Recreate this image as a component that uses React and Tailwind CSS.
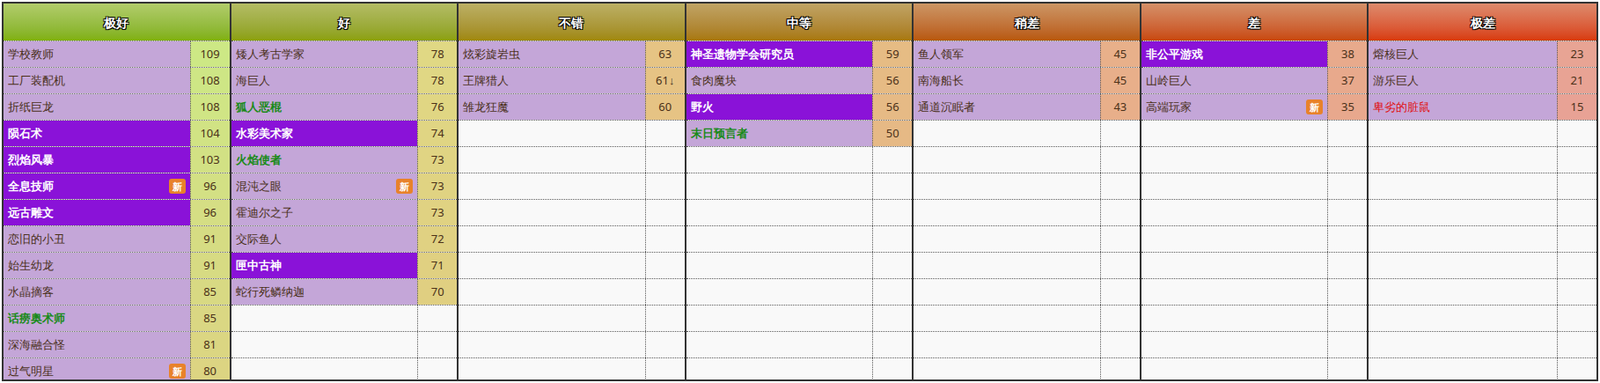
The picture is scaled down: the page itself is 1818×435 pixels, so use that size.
const COLS = [
  { title: "极好", head: "from-[#b2cc6a] to-[#80b00a]", score: ["#cde885", "#dcd482"], rows: [
    ["学校教师", 109], ["工厂装配机", 108], ["折纸巨龙", 108], ["陨石术", 104, "p"], ["烈焰风暴", 103, "p"],
    ["全息技师", 96, "p", 1], ["远古雕文", 96, "p"], ["恋旧的小丑", 91], ["始生幼龙", 91], ["水晶摘客", 85],
    ["话痨奥术师", 85, "g"], ["深海融合怪", 81], ["过气明星", 80, 0, 1],
  ] },
  { title: "好", head: "from-[#b4bc64] to-[#8ca008]", score: ["#e0d884", "#e0cc80"], rows: [
    ["矮人考古学家", 78], ["海巨人", 78], ["狐人恶棍", 76, "g"], ["水彩美术家", 74, "p"], ["火焰使者", 73, "g"],
    ["混沌之眼", 73, 0, 1], ["霍迪尔之子", 73], ["交际鱼人", 72], ["匣中古神", 71, "p"], ["蛇行死鳞纳迦", 70],
  ] },
  { title: "不错", head: "from-[#bcb064] to-[#a08808]", score: ["#e6c484", "#e6bc84"], rows: [
    ["炫彩旋岩虫", 63], ["王牌猎人", "61↓"], ["雏龙狂魔", 60],
  ] },
  { title: "中等", head: "from-[#c0a464] to-[#a87808]", score: ["#e6bc84", "#e6b088"], rows: [
    ["神圣遗物学会研究员", 59, "p"], ["食肉魔块", 56], ["野火", 56, "p"], ["末日预言者", 50, "g"],
  ] },
  { title: "稍差", head: "from-[#cc9664] to-[#b85808]", score: ["#e8b08a", "#e8a88a"], rows: [
    ["鱼人领军", 45], ["南海船长", 45], ["通道沉眠者", 43],
  ] },
  { title: "差", head: "from-[#d49068] to-[#c84808]", score: ["#e8aa8c", "#e8a090"], rows: [
    ["非公平游戏", 38, "p"], ["山岭巨人", 37], ["高端玩家", 35, 0, 1],
  ] },
  { title: "极差", head: "from-[#dc8a6c] to-[#d83a08]", score: ["#e8a494", "#e89a98"], rows: [
    ["熔核巨人", 23], ["游乐巨人", 21], ["卑劣的脏鼠", 15, "r"],
  ] },
];

const NAME = {
  p: "bg-[#8a12d8] text-white font-bold",
  g: "bg-[#c4a6d8] text-[#1a8a1a] font-bold",
  r: "bg-[#c4a6d8] text-[#e01010]",
};

function mix(a, b, t) {
  const p = h => [1, 3, 5].map(i => parseInt(h.slice(i, i + 2), 16));
  const [x, y] = [p(a), p(b)];
  return `rgb(${x.map((v, i) => Math.round(v + (y[i] - v) * t)).join(",")})`;
}

function Column({ col, last }) {
  const rows = Array.from({ length: 13 }, (_, i) => col.rows[i]);
  return (
    <div className={`flex flex-col ${last ? "" : "border-r-2 border-[#333]"}`}>
      <div className={`h-[42px] flex items-center justify-center bg-gradient-to-b ${col.head} text-white text-[14px] font-bold [text-shadow:1px_1px_0_#000,-1px_-1px_0_#000,1px_-1px_0_#000,-1px_1px_0_#000]`}>
        {col.title}
      </div>
      {rows.map((r, i) => (
        <div key={i} className="h-[30px] flex border-t border-dotted border-[#555]">
          {r ? (
            <>
              <div className={`flex-1 flex items-center px-[5px] text-[13px] ${NAME[r[2]] || "bg-[#c4a6d8] text-[#4a3018]"}`}>
                <span className="flex-1">{r[0]}</span>
                {r[3] ? (
                  <span className="bg-[#e8822a] text-white text-[11px] font-bold rounded-[3px] px-[4px] leading-[17px]">新</span>
                ) : null}
              </div>
              <div
                className="w-[45px] flex items-center justify-center border-l border-dotted border-[#555] text-[13px] text-[#4a3018]"
                style={{ background: mix(col.score[0], col.score[1], i / 12) }}
              >
                {r[1]}
              </div>
            </>
          ) : (
            <>
              <div className="flex-1 bg-[#f9f9f9]" />
              <div className="w-[45px] bg-[#f9f9f9] border-l border-dotted border-[#555]" />
            </>
          )}
        </div>
      ))}
    </div>
  );
}

export default function App() {
  return (
    <div className="w-[1818px] h-[435px] bg-white p-[2px] font-['Noto_Sans_CJK_SC',sans-serif]">
      <div className="border-2 border-[#333] grid grid-cols-7 overflow-hidden h-[431px]">
        {COLS.map((c, i) => (
          <Column key={c.title} col={c} last={i === 6} />
        ))}
      </div>
    </div>
  );
}
